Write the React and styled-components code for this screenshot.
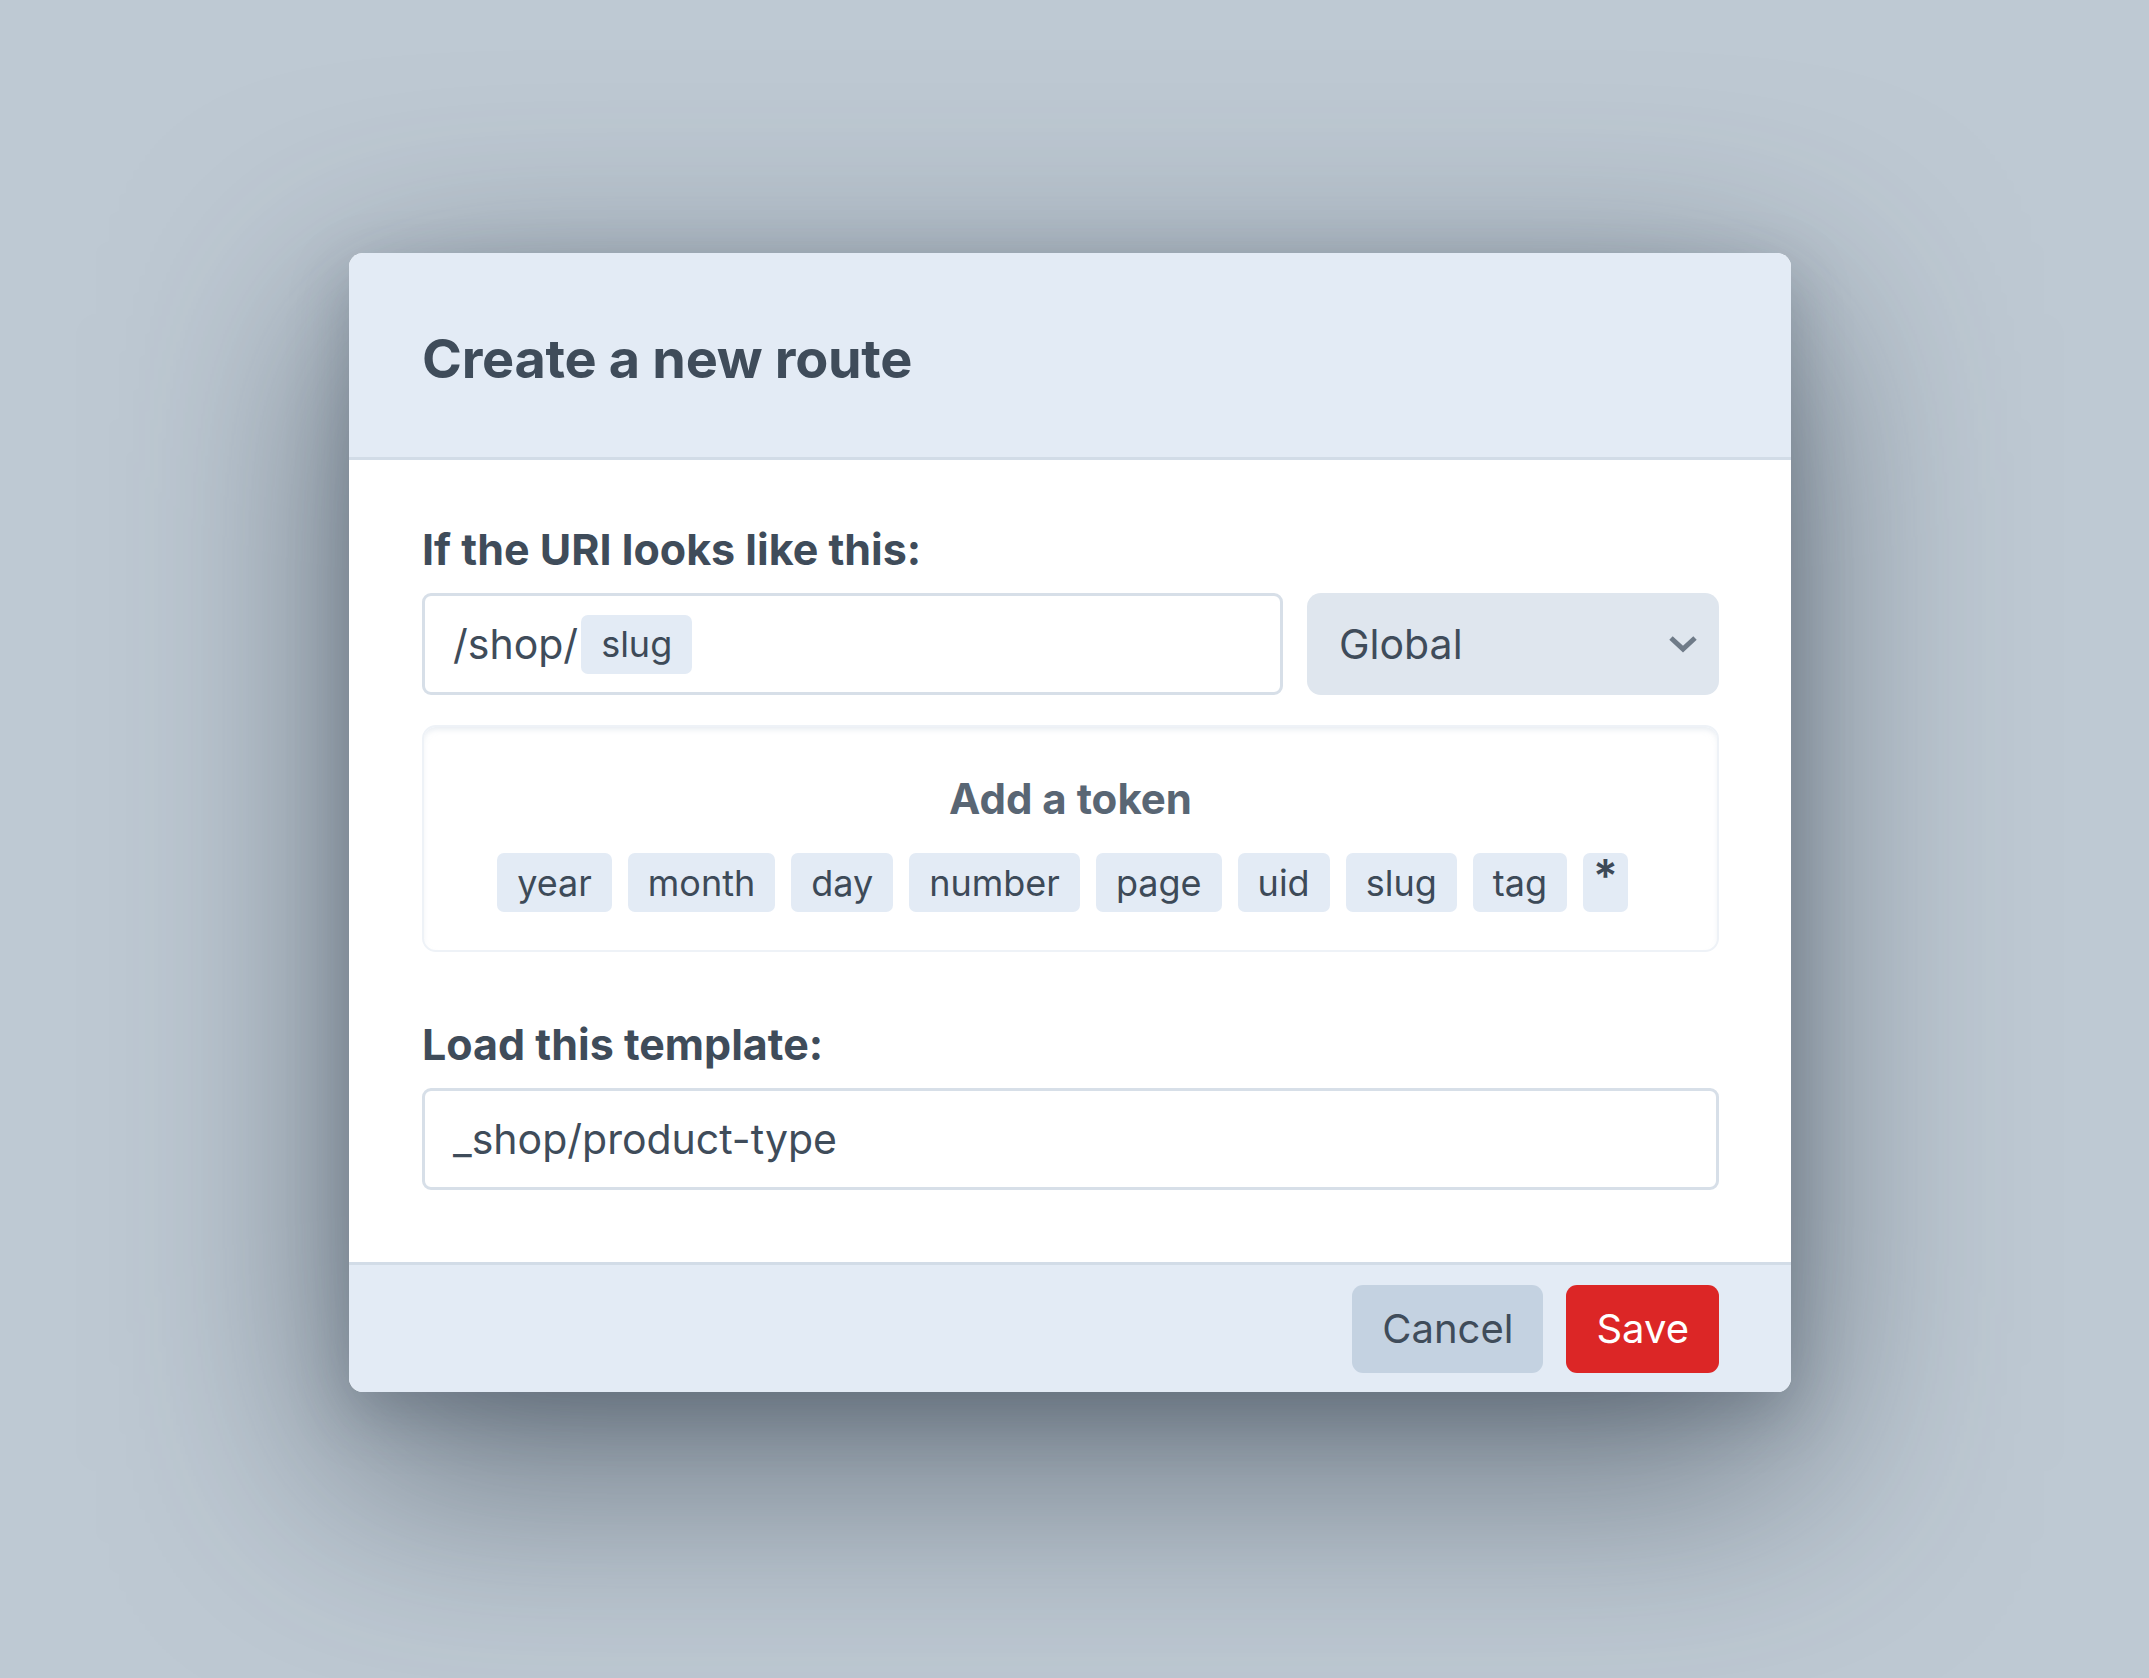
import React from "react";
import styled, { createGlobalStyle } from "styled-components";

const GlobalStyle = createGlobalStyle`
  html, body {
    margin: 0;
    padding: 0;
  }
  body {
    font-family: Inter, "Noto Sans", "Liberation Sans", sans-serif;
    color: #3f4c5a;
  }
`;

const Page = styled.div`
  width: 2149px;
  height: 1678px;
  display: flex;
  align-items: flex-start;
  padding: 253px 0 0 349px;
  box-sizing: border-box;
  overflow: hidden;
  background: #bec9d3;
`;

const Modal = styled.div`
  width: 1442px;
  height: 1139px;
  display: flex;
  flex-direction: column;
  background: #ffffff;
  border-radius: 14px;
  overflow: hidden;
  box-shadow: 0 70px 220px 10px rgba(45, 56, 70, 0.6),
    0 20px 60px rgba(45, 56, 70, 0.25);
`;

const Header = styled.div`
  height: 207px;
  flex-shrink: 0;
  display: flex;
  align-items: center;
  padding: 6px 73px 0;
  background: #e3ebf5;
  border-bottom: 3px solid #d2dce7;
  box-sizing: border-box;
`;

const Title = styled.h1`
  margin: 0;
  font-size: 54px;
  font-weight: 700;
  letter-spacing: -0.3px;
  color: #3f4c5a;
`;

const Body = styled.div`
  flex: 1;
  padding: 61px 72px 0 73px;
  display: flex;
  flex-direction: column;
`;

const Label = styled.div`
  font-size: 43px;
  font-weight: 700;
  line-height: 56px;
  color: #3f4c5a;
  margin-top: ${(p) => p.$top || 0}px;
  margin-bottom: 16px;
`;

const Row = styled.div`
  display: flex;
  gap: 24px;
`;

const TextField = styled.div`
  flex: ${(p) => (p.$grow ? 1 : "none")};
  height: 102px;
  box-sizing: border-box;
  border: 3px solid #d7dfe8;
  border-radius: 9px;
  display: flex;
  align-items: center;
  gap: 3px;
  padding: 0 28px;
  font-size: 41px;
  color: #3f4c5a;
`;

const Chip = styled.span`
  display: inline-flex;
  align-items: center;
  height: 59px;
  padding: 0 ${(p) => p.$pad || 20}px;
  background: #e3ebf5;
  border-radius: 7px;
  font-size: 36px;
  color: #3d4a58;
  box-sizing: border-box;
`;

const Star = styled.span`
  font-size: 46px;
  font-weight: 600;
  line-height: 1;
  margin-top: -14px;
`;

const Select = styled.div`
  width: 412px;
  height: 102px;
  box-sizing: border-box;
  background: #dfe6ee;
  border-radius: 14px;
  display: flex;
  align-items: center;
  justify-content: space-between;
  padding: 0 20px 0 32px;
  font-size: 41px;
  color: #3f4c5a;
`;

const TokenBox = styled.div`
  margin-top: 30px;
  height: 227px;
  box-sizing: border-box;
  border: 2px solid #eef2f7;
  border-radius: 14px;
  box-shadow: inset 0 4px 6px -2px rgba(180, 195, 212, 0.35);
  display: flex;
  flex-direction: column;
  align-items: center;
  padding-top: 44px;
`;

const TokenTitle = styled.div`
  font-size: 42px;
  font-weight: 700;
  color: #596674;
  line-height: 56px;
`;

const TokenList = styled.div`
  display: flex;
  gap: 16px;
  margin-top: 26px;
  padding-right: 16px;
`;

const Footer = styled.div`
  height: 130px;
  flex-shrink: 0;
  box-sizing: border-box;
  background: #e3ebf5;
  border-top: 3px solid #d2dce7;
  display: flex;
  align-items: center;
  justify-content: flex-end;
  gap: 23px;
  padding: 0 72px;
`;

const Button = styled.button`
  height: 88px;
  padding: 0 ${(p) => p.$pad}px;
  border: none;
  border-radius: 11px;
  font-family: inherit;
  font-size: 40px;
  background: ${(p) => (p.$primary ? "#dc2626" : "#c4d2e1")};
  color: ${(p) => (p.$primary ? "#ffffff" : "#3f4c5a")};
`;

const tokens = ["year", "month", "day", "number", "page", "uid", "slug", "tag"];

function Chevron() {
  return (
    <svg width="32" height="20" viewBox="0 0 32 20">
      <polyline
        points="4,4 16,15 28,4"
        fill="none"
        stroke="#6f7b88"
        strokeWidth="5"
      />
    </svg>
  );
}

export default function App() {
  return (
    <>
      <GlobalStyle />
      <Page>
        <Modal>
          <Header>
            <Title>Create a new route</Title>
          </Header>
          <Body>
            <Label>If the URI looks like this:</Label>
            <Row>
              <TextField $grow>
                <span>/shop/</span>
                <Chip>slug</Chip>
              </TextField>
              <Select>
                <span>Global</span>
                <Chevron />
              </Select>
            </Row>
            <TokenBox>
              <TokenTitle>Add a token</TokenTitle>
              <TokenList>
                {tokens.map((t) => (
                  <Chip key={t}>{t}</Chip>
                ))}
                <Chip $pad={10}>
                  <Star>*</Star>
                </Chip>
              </TokenList>
            </TokenBox>
            <Label $top={64}>Load this template:</Label>
            <TextField>_shop/product-type</TextField>
          </Body>
          <Footer>
            <Button $pad={30}>Cancel</Button>
            <Button $primary $pad={30}>
              Save
            </Button>
          </Footer>
        </Modal>
      </Page>
    </>
  );
}
